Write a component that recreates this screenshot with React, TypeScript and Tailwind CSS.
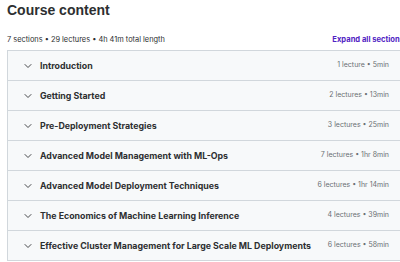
import { ChevronDown } from "lucide-react";

const sections = [
  { title: "Introduction", meta: "1 lecture • 5min" },
  { title: "Getting Started", meta: "2 lectures • 13min" },
  { title: "Pre-Deployment Strategies", meta: "3 lectures • 25min" },
  { title: "Advanced Model Management with ML-Ops", meta: "7 lectures • 1hr 8min" },
  { title: "Advanced Model Deployment Techniques", meta: "6 lectures • 1hr 14min" },
  { title: "The Economics of Machine Learning Inference", meta: "4 lectures • 39min" },
  { title: "Effective Cluster Management for Large Scale ML Deployments", meta: "6 lectures • 58min" },
];

export default function App() {
  return (
    <div
      className="w-[400px] h-[262px] overflow-hidden bg-white text-[#2d2f31]"
      style={{ fontFamily: "Inter, 'Noto Sans', sans-serif" }}
    >
      <div className="pl-[7px] w-[420px]">
        <h2
          className="text-[14px] font-bold leading-[20px] h-[20px]"
          style={{ fontFamily: "'Liberation Sans', Arial, sans-serif" }}
        >
          Course content
        </h2>
        <div className="flex items-center justify-between mt-[14px] pr-[16px] h-[12px]">
          <p className="text-[7.4px] text-[#2d2f31]">7 sections • 29 lectures • 4h 41m total length</p>
          <button className="text-[7.6px] font-bold text-[#5022c3]">Expand all sections</button>
        </div>
        <div className="mt-[4px] border border-[#d1d7dc] border-b-0">
          {sections.map((s) => (
            <div
              key={s.title}
              className="flex items-center h-[30px] bg-[#f7f9fa] border-b border-[#d1d7dc] pl-[14px] pr-[30px]"
            >
              <ChevronDown className="w-[12px] h-[12px] text-[#2d2f31]" strokeWidth={1.75} />
              <span className="ml-[6px] text-[8.8px] font-bold flex-1">{s.title}</span>
              <span className="text-[7px] text-[#6a6f73]">{s.meta}</span>
            </div>
          ))}
        </div>
      </div>
    </div>
  );
}
